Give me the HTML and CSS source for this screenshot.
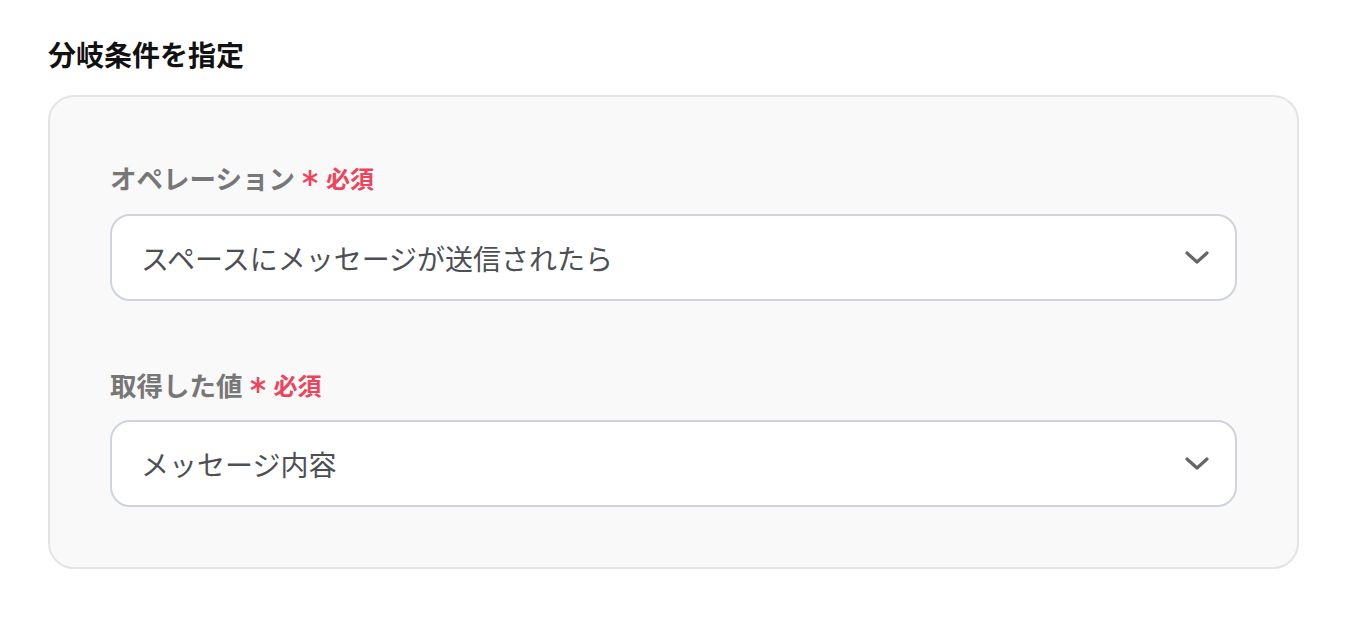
FILE: index.html
```html
<!DOCTYPE html>
<html lang="ja">
<head>
<meta charset="utf-8">
<link rel="stylesheet" href="styles.css">
</head>
<body>
<h2 class="title">分岐条件を指定</h2>
<div class="panel">
  <div class="field">
    <div class="label">オペレーション<span class="req"><svg class="ast" viewBox="0 0 18 18" width="18" height="18"><g stroke="currentColor" stroke-width="2.6" stroke-linecap="butt"><line x1="9" y1="1" x2="9" y2="17"/><line x1="2.1" y1="5" x2="15.9" y2="13"/><line x1="2.1" y1="13" x2="15.9" y2="5"/></g></svg>必須</span></div>
    <div class="select"><span class="value">スペースにメッセージが送信されたら</span><svg class="chev" viewBox="0 0 24 14" width="24" height="14"><path d="M2 2 L12 11 L22 2" fill="none" stroke="currentColor" stroke-width="3.2" stroke-linecap="round" stroke-linejoin="round"/></svg></div>
  </div>
  <div class="field second">
    <div class="label">取得した値<span class="req"><svg class="ast" viewBox="0 0 18 18" width="18" height="18"><g stroke="currentColor" stroke-width="2.6"><line x1="9" y1="1" x2="9" y2="17"/><line x1="2.1" y1="5" x2="15.9" y2="13"/><line x1="2.1" y1="13" x2="15.9" y2="5"/></g></svg>必須</span></div>
    <div class="select"><span class="value">メッセージ内容</span><svg class="chev" viewBox="0 0 24 14" width="24" height="14"><path d="M2 2 L12 11 L22 2" fill="none" stroke="currentColor" stroke-width="3.2" stroke-linecap="round" stroke-linejoin="round"/></svg></div>
  </div>
</div>
</body>
</html>
```
FILE: styles.css
```css
html, body {
  margin: 0;
  padding: 0;
  background: #ffffff;
  font-family: "Noto Sans CJK JP", "Noto Sans", sans-serif;
}
.title {
  margin: 34px 0 0 48px;
  font-size: 28px;
  line-height: 40px;
  font-weight: 700;
  color: #111111;
  height: 40px;
}
.panel {
  margin: 21px 0 0 48px;
  width: 1251px;
  box-sizing: border-box;
  background: #f9f9f9;
  border: 2px solid #e4e4e4;
  border-radius: 26px;
  padding: 63px 60px 60px 60px;
}
.field {
  display: flex;
  flex-direction: column;
  gap: 18px;
}
.field.second {
  margin-top: 66px;
  gap: 17px;
}
.label {
  display: flex;
  align-items: center;
  font-size: 26.5px;
  line-height: 36px;
  height: 36px;
  font-weight: 700;
  color: #777777;
}
.req {
  display: inline-flex;
  align-items: center;
  margin-left: 6px;
  color: #f04359;
  font-size: 24px;
  font-weight: 700;
}
.ast {
  margin-right: 7px;
}
.select {
  display: flex;
  align-items: center;
  justify-content: space-between;
  height: 87px;
  box-sizing: border-box;
  background: #ffffff;
  border: 2px solid #cfd3dc;
  border-radius: 20px;
  padding: 0 26px 0 29px;
}
.value {
  font-size: 28px;
  color: #4d4f55;
  font-weight: 400;
}
.chev {
  color: #666666;
}
```
